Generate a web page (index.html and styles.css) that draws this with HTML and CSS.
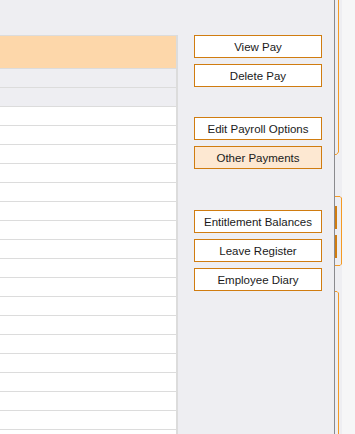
FILE: index.html
```html
<!DOCTYPE html>
<html lang="en">
<head>
    <meta charset="UTF-8">
    <title>Payroll</title>
    <link rel="stylesheet" href="styles.css">
</head>
<body>
<div id="page">
    <div id="grid">
        <div class="head"></div>
        <div class="row filter"></div>
        <div class="row filter"></div>
        <div class="row"></div>
        <div class="row"></div>
        <div class="row"></div>
        <div class="row"></div>
        <div class="row"></div>
        <div class="row"></div>
        <div class="row"></div>
        <div class="row"></div>
        <div class="row"></div>
        <div class="row"></div>
        <div class="row"></div>
        <div class="row"></div>
        <div class="row"></div>
        <div class="row"></div>
        <div class="row"></div>
        <div class="row"></div>
        <div class="row"></div>
        <div class="row"></div>
    </div>
    <div id="actions">
        <div class="group">
            <button class="btn">View Pay</button>
            <button class="btn">Delete Pay</button>
        </div>
        <div class="group mid">
            <button class="btn">Edit Payroll Options</button>
            <button class="btn active">Other Payments</button>
        </div>
        <div class="group low">
            <button class="btn">Entitlement Balances</button>
            <button class="btn">Leave Register</button>
            <button class="btn">Employee Diary</button>
        </div>
    </div>
    <div id="side">
        <svg width="20" height="434" viewBox="0 0 20 434">
            <rect x="7" y="0" width="13" height="434" fill="#f6f6f7"/>
            <path d="M3.5 0 V152 L1.5 154.5 H0" fill="none" stroke="#f59a23"/>
            <path d="M0 196.5 H5 L6.5 198 V264 L5 265.5 H0" fill="#eeeef2" stroke="#f59a23"/>
            <rect x="0" y="206" width="2" height="23" fill="#d07c10"/>
            <rect x="0" y="235" width="2" height="23" fill="#d07c10"/>
            <path d="M0 291.5 H2 L3.5 293 V434" fill="none" stroke="#f59a23"/>
        </svg>
    </div>
</div>
</body>
</html>
```

FILE: styles.css
```css
* {
    margin: 0;
    padding: 0;
    box-sizing: border-box;
}

body {
    background: #eeeef2;
    font-family: "Liberation Sans", Arial, sans-serif;
    overflow: hidden;
}

#page {
    display: flex;
    height: 434px;
}

#grid {
    width: 178px;
    margin-top: 35px;
    border-top: 1px solid #dcdcdc;
    border-right: 2px solid #dcdcdc;
    overflow: hidden;
}

#grid .head {
    height: 33px;
    background: #fdd7aa;
    border-bottom: 1px solid #dcdcdc;
}

#grid .row {
    height: 19px;
    background: #ffffff;
    border-bottom: 1px solid #dcdcdc;
}

#grid .filter {
    background: #eeeef2;
}

#actions {
    flex: 1;
    padding: 35px 0 0 16px;
}

.group {
    display: flex;
    flex-direction: column;
    gap: 6px;
    width: 128px;
}

.group.mid {
    margin-top: 30px;
}

.group.low {
    margin-top: 41px;
}

.btn {
    height: 23px;
    background: #ffffff;
    border: 1px solid #d07c10;
    color: #1a1a1a;
    font-family: "Liberation Sans", Arial, sans-serif;
    font-size: 11.5px;
    text-align: center;
}

.btn.active {
    background: #fde8d2;
}

#side {
    width: 21px;
    border-left: 1px solid #8a8a8e;
}

#side svg {
    display: block;
}
```
